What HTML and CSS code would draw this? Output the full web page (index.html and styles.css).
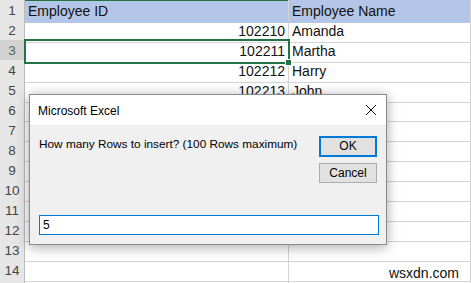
FILE: index.html
```html
<!DOCTYPE html>
<html>
<head>
<meta charset="utf-8">
<link rel="stylesheet" href="styles.css">
</head>
<body>
<div class="sheet">
  <div class="row head"><div class="rh">1</div><div class="c a hdr">Employee ID</div><div class="c b hdr">Employee Name</div></div>
  <div class="row"><div class="rh">2</div><div class="c a num">102210</div><div class="c b">Amanda</div></div>
  <div class="row"><div class="rh sel">3</div><div class="c a num active">102211<span class="handle"></span></div><div class="c b">Martha</div></div>
  <div class="row"><div class="rh">4</div><div class="c a num">102212</div><div class="c b">Harry</div></div>
  <div class="row"><div class="rh">5</div><div class="c a num">102213</div><div class="c b">John</div></div>
  <div class="row"><div class="rh">6</div><div class="c a"></div><div class="c b"></div></div>
  <div class="row"><div class="rh">7</div><div class="c a"></div><div class="c b"></div></div>
  <div class="row"><div class="rh">8</div><div class="c a"></div><div class="c b"></div></div>
  <div class="row"><div class="rh">9</div><div class="c a"></div><div class="c b"></div></div>
  <div class="row"><div class="rh">10</div><div class="c a"></div><div class="c b"></div></div>
  <div class="row"><div class="rh">11</div><div class="c a"></div><div class="c b"></div></div>
  <div class="row"><div class="rh">12</div><div class="c a"></div><div class="c b"></div></div>
  <div class="row"><div class="rh">13</div><div class="c a"></div><div class="c b"></div></div>
  <div class="row"><div class="rh">14</div><div class="c a"></div><div class="c b"></div></div>
  <div class="row"><div class="rh"></div><div class="c a"></div><div class="c b"></div></div>
</div>

<div class="dialog">
  <div class="titlebar">
    <span class="title">Microsoft Excel</span>
    <svg class="close" width="12" height="12" viewBox="0 0 12 12"><path d="M1 1L11 11M11 1L1 11" stroke="#111" stroke-width="1" fill="none"/></svg>
  </div>
  <div class="body">
    <div class="top">
      <div class="msg">How many Rows to insert? (100 Rows maximum)</div>
      <div class="buttons">
        <div class="btn ok">OK</div>
        <div class="btn">Cancel</div>
      </div>
    </div>
    <div class="input">5</div>
  </div>
</div>

<div class="watermark">wsxdn.com</div>
</body>
</html>
```
FILE: styles.css
```css
html, body {
  margin: 0;
  padding: 0;
  background: #fff;
  overflow: hidden;
}
body {
  width: 471px;
  height: 283px;
  position: relative;
  font-family: "Liberation Sans", Arial, sans-serif;
}
.sheet {
  display: flex;
  flex-direction: column;
}
.row {
  display: grid;
  grid-template-columns: 25px 264px 1fr;
  height: 20px;
}
.rh {
  box-sizing: border-box;
  background: #e6e6e6;
  border-right: 1px solid #bcbcbc;
  border-bottom: 1px solid #c8c8c8;
  color: #444;
  font-size: 13.5px;
  text-align: center;
  line-height: 21px;
}
.rh.sel {
  background: #d2d2d2;
  color: #4b6b55;
}
.c {
  box-sizing: border-box;
  border-right: 1px solid #d4d4d4;
  border-bottom: 1px solid #d4d4d4;
  font-size: 14px;
  line-height: 22px;
  color: #111;
  padding: 0 3px;
  white-space: nowrap;
}
.hdr {
  background: #b4c6e7;
  border-bottom-color: #b4c6e7;
}
.c.a.hdr {
  box-shadow: inset 0 1px 0 #217346;
}
.num {
  text-align: right;
}
.active {
  position: relative;
  outline: 2px solid #217346;
  outline-offset: -1px;
}
.handle {
  position: absolute;
  right: -4px;
  bottom: -4px;
  width: 5px;
  height: 5px;
  background: #217346;
  border: 1px solid #fff;
}

.dialog {
  position: absolute;
  left: 29px;
  top: 94px;
  width: 358px;
  height: 151px;
  box-sizing: border-box;
  border: 1px solid #8a8a8a;
  background: #f0f0f0;
  box-shadow: 0 2px 12px rgba(0,0,0,0.35);
  display: flex;
  flex-direction: column;
  font-size: 12px;
  color: #000;
}
.titlebar {
  height: 30px;
  background: #fff;
  display: flex;
  align-items: center;
  justify-content: space-between;
  padding: 0 9px 0 8px;
}
.title {
  padding-top: 1px;
}
.close {
  display: block;
}
.body {
  flex: 1;
  display: flex;
  flex-direction: column;
  padding: 11px 9px 9px 9px;
}
.top {
  display: flex;
  justify-content: space-between;
}
.msg {
  line-height: 15px;
  font-size: 11.8px;
  padding-top: 1px;
}
.buttons {
  display: flex;
  flex-direction: column;
  gap: 6px;
}
.btn {
  box-sizing: border-box;
  width: 58px;
  height: 20px;
  background: #e1e1e1;
  border: 1px solid #adadad;
  text-align: center;
  line-height: 18px;
}
.btn.ok {
  height: 21px;
  border: 2px solid #0078d7;
  line-height: 17px;
}
.input {
  margin-top: auto;
  box-sizing: border-box;
  width: 340px;
  height: 20px;
  background: #fff;
  border: 1px solid #0078d7;
  padding: 0 3px;
  line-height: 18px;
  font-size: 12px;
}

.watermark {
  position: absolute;
  right: 12px;
  top: 264px;
  font-size: 14px;
  color: #111;
  line-height: 18px;
}
```
